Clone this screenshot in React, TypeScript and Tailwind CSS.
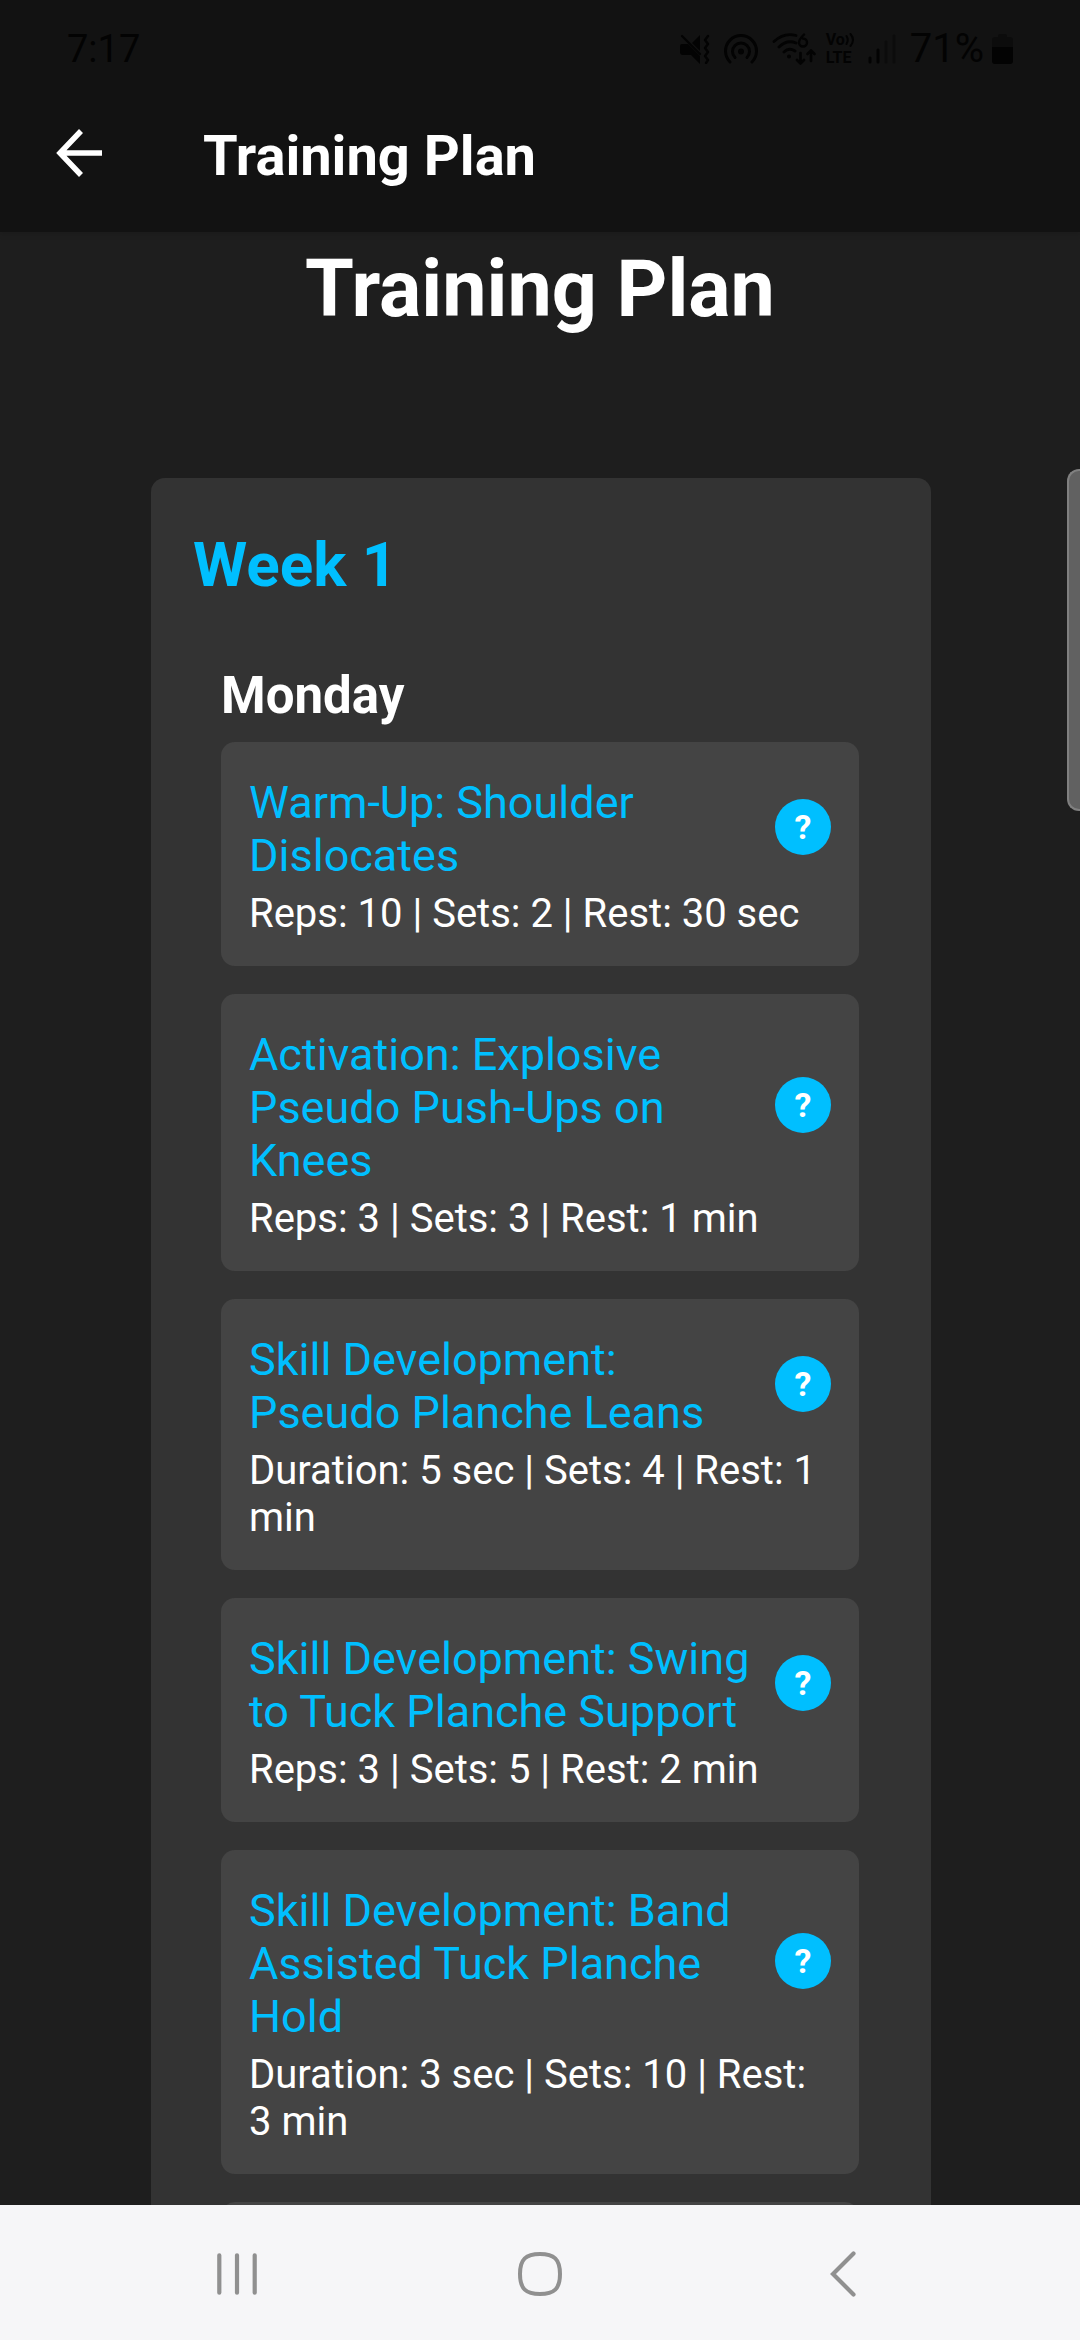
type Exercise = { name: string; details: string };

const monday: Exercise[] = [
  { name: "Warm-Up: Shoulder Dislocates", details: "Reps: 10 | Sets: 2 | Rest: 30 sec" },
  { name: "Activation: Explosive Pseudo Push-Ups on Knees", details: "Reps: 3 | Sets: 3 | Rest: 1 min" },
  { name: "Skill Development: Pseudo Planche Leans", details: "Duration: 5 sec | Sets: 4 | Rest: 1 min" },
  { name: "Skill Development: Swing to Tuck Planche Support", details: "Reps: 3 | Sets: 5 | Rest: 2 min" },
  { name: "Skill Development: Band Assisted Tuck Planche Hold", details: "Duration: 3 sec | Sets: 10 | Rest: 3 min" },
];

function MutedIcon() {
  return (
    <svg width="30" height="30" viewBox="0 0 30 30" fill="currentColor" aria-hidden="true">
      <path d="M2 10h6l12 12v8l-9-9H3q-3 0-3-3v-6q0-2 2-2zM20 1v16l-8-8z" />
      <path d="M2 2l18 18" stroke="currentColor" strokeWidth="2.2" strokeLinecap="round" />
      <path d="M28 2l-3 4 3 4-3 4 3 4-3 4 3 4-2 3" fill="none" stroke="currentColor" strokeWidth="2.4" strokeLinecap="round" strokeLinejoin="round" />
    </svg>
  );
}

function HotspotIcon() {
  return (
    <svg width="34" height="30" viewBox="0 0 34 30" fill="none" stroke="currentColor" strokeWidth="3" strokeLinecap="round" aria-hidden="true">
      <path d="M6 28a15.500 15.500 0 1 1 22 0" />
      <path d="M11 23.500a8.500 8.500 0 1 1 12 0" />
      <circle cx="17" cy="17.500" r="3" fill="currentColor" stroke="none" />
    </svg>
  );
}

function WifiIcon() {
  return (
    <svg width="44" height="32" viewBox="0 0 44 32" fill="none" stroke="currentColor" strokeLinecap="round" strokeLinejoin="round" aria-hidden="true">
      <path d="M2 8.500C9 2 17 0.500 24 2.500M7 14c5-5 11-6.500 17-4M12 19c3-3 7-3.500 11-1" strokeWidth="2.800" />
      <circle cx="17" cy="23.500" r="2" fill="currentColor" stroke="none" />
      <path d="M32 1.500c-3 3-5 5.500-5 8a4 4 0 1 0 4-4" strokeWidth="2.400" />
      <path d="M28.500 20v10M25 27l3.500 3.500L32 27M39 28V18M35.500 21l3.500-3.500 3.500 3.500" strokeWidth="2.600" />
    </svg>
  );
}

function SignalIcon() {
  return (
    <svg width="28" height="30" viewBox="0 0 28 30" stroke="currentColor" strokeWidth="3" strokeLinecap="round" aria-hidden="true">
      <path d="M2 24v4M10 16v12" />
      <path d="M18 8v20M26 2v26" opacity="0.350" />
    </svg>
  );
}

function VolteIcon() {
  return (
    <span className="flex w-[30px] flex-col text-[16px] leading-[18px] font-bold">
      <span className="flex items-center">
        Vo
        <svg className="shrink-0" width="10" height="14" viewBox="0 0 10 14" fill="none" stroke="currentColor" strokeWidth="2" strokeLinecap="round" aria-hidden="true">
          <path d="M1.500 3q2.500 4 0 8M5.500 1q5 6 0 12" />
        </svg>
      </span>
      <span>LTE</span>
    </span>
  );
}

function BatteryIcon() {
  return (
    <svg width="21" height="30" viewBox="0 0 21 30" fill="currentColor" aria-hidden="true">
      <path d="M6 2q0-2 2-2h5q2 0 2 2v1h3q3 0 3 3v7H0V6q0-3 3-3h3z" opacity="0.350" />
      <path d="M0 13h21v14q0 3-3 3H3q-3 0-3-3z" />
    </svg>
  );
}

function StatusBar() {
  return (
    <div className="flex h-[98px] items-center justify-between px-[67px] leading-[40px] text-[#030303]">
      <span className="text-[38px]">7:17</span>
      <div className="flex items-center">
        <div className="flex items-center gap-[14px]">
          <MutedIcon />
          <HotspotIcon />
          <WifiIcon />
        </div>
        <div className="ml-[10px] flex items-center gap-3">
          <VolteIcon />
          <SignalIcon />
        </div>
        <span className="ml-[14px] text-[40px]">71%</span>
        <span className="ml-2">
          <BatteryIcon />
        </span>
      </div>
    </div>
  );
}

function ExerciseCard({ name, details }: Exercise) {
  return (
    <li className="rounded-[14px] bg-[#444444] p-7">
      <div className="flex items-center justify-between">
        <h4 className="flex-1 pt-[6px] pb-px text-[45px] leading-[53px] text-[#00bfff]">{name}</h4>
        <button
          type="button"
          aria-label={`About ${name}`}
          className="ml-5 flex size-14 shrink-0 items-center justify-center rounded-full bg-[#00bfff] text-[34px] leading-[40px] font-bold text-white"
        >
          ?
        </button>
      </div>
      <p className="pt-[7px] pb-px text-[40px] leading-[47px] text-white">{details}</p>
    </li>
  );
}

export default function App() {
  return (
    <div className="relative flex h-screen flex-col overflow-hidden bg-[#1e1e1e] font-[Roboto,sans-serif] text-white">
      <header className="relative shrink-0 bg-[#121212] shadow-[0_2px_6px_rgba(0,0,0,0.15)]">
        <StatusBar />
        <div className="flex h-[134px] items-center pb-[18px] pl-[56px]">
          <button type="button" aria-label="Back" className="flex w-[147px] items-center pb-2">
            <svg width="48" height="50" viewBox="0 0 48 50" fill="none" stroke="currentColor" strokeWidth="5.500" aria-hidden="true">
              <path d="M46 26H5M25 4L4 26l21 22" />
            </svg>
          </button>
          <span className="text-[56px] leading-[66px] font-bold">Training Plan</span>
        </div>
      </header>

      <main className="min-h-0 flex-1 overflow-hidden pt-[11px]">
        <h1 className="text-center text-[79px] leading-[93px] font-bold">Training Plan</h1>
        <section className="mt-[142px] mr-[149px] ml-[151px] rounded-[14px] bg-[#333333] pt-[50px] pb-7">
          <h2 className="px-[42px] text-[62px] leading-[73px] font-bold text-[#00bfff]">Week 1</h2>
          <div className="mt-[65px] pr-[72px] pl-[70px]">
            <h3 className="text-[51px] leading-[60px] font-bold">Monday</h3>
            <ul className="mt-4 flex flex-col gap-7">
              {monday.map((exercise) => (
                <ExerciseCard key={exercise.name} {...exercise} />
              ))}
              <li className="h-56 rounded-[14px] bg-[#444444]" />
            </ul>
          </div>
        </section>
      </main>

      <div className="absolute top-[469px] right-0 h-[342px] w-[13px] rounded-l-[12px] border-2 border-r-0 border-[#808080] bg-[#616161]" />

      <nav className="grid h-[135px] shrink-0 grid-cols-3 bg-[#f6f6f8] px-[86px] pt-[3px] text-[#909090]">
        <button type="button" aria-label="Recent apps" className="flex items-center justify-center">
          <svg width="40" height="42" viewBox="0 0 40 42" stroke="currentColor" strokeWidth="4.200" strokeLinecap="round" aria-hidden="true">
            <path d="M2.300 2.300v37.400M20 2.300v37.400M37.700 2.300v37.400" />
          </svg>
        </button>
        <button type="button" aria-label="Home" className="flex items-center justify-center">
          <svg width="44" height="44" viewBox="0 0 44 44" fill="none" stroke="currentColor" strokeWidth="4" aria-hidden="true">
            <path d="M22 2c14 0 20 5 20 20s-6 20-20 20S2 37 2 22 8 2 22 2z" />
          </svg>
        </button>
        <button type="button" aria-label="Go back" className="flex items-center justify-center">
          <svg width="26" height="46" viewBox="0 0 26 46" fill="none" stroke="currentColor" strokeWidth="4.200" strokeLinecap="round" aria-hidden="true">
            <path d="M23.500 2.500L3 23l20.500 20.500" />
          </svg>
        </button>
      </nav>
    </div>
  );
}
